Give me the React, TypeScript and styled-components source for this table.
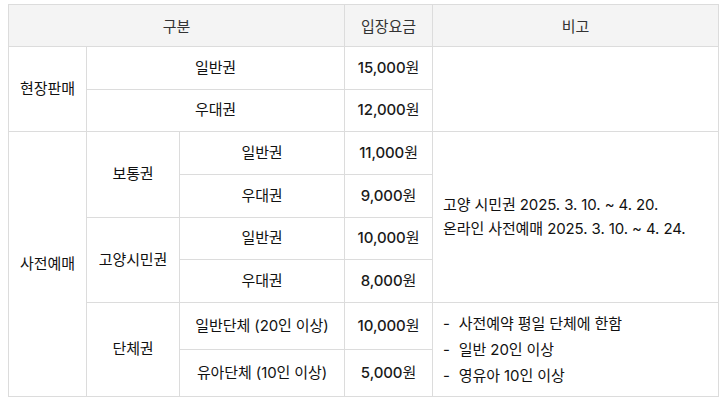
import React from 'react'
import styled, { createGlobalStyle } from 'styled-components'

const GlobalStyle = createGlobalStyle`
    body {
        margin: 0;
        background: #fff;
        font-family: Inter, "Noto Sans CJK KR", sans-serif;
        color: #111;
    }
`

const Page = styled.div`
    padding: 4px 6px 0 8px;
`

const Table = styled.table`
    width: 711px;
    border-collapse: collapse;
    table-layout: fixed;
    font-size: 15px;
    letter-spacing: -0.1px;
`

const Th = styled.th`
    height: 41px;
    background: #f4f4f4;
    border: 1px solid #dcdcdc;
    font-weight: 400;
    color: #333;
    text-align: center;
    padding: 0;
`

const Row = styled.tr<{ $h?: number }>`
    height: ${p => p.$h ?? 43}px;
`

const Td = styled.td`
    border: 1px solid #dcdcdc;
    text-align: center;
    vertical-align: middle;
    padding: 0;
    line-height: 1.5;
`

const Price = styled(Td)`
    font-weight: 500;
    color: #1a1a1a;
`

const Note = styled(Td)`
    text-align: left;
    padding: 0 10px;
    line-height: 24px;
`

const NoteList = styled.ul`
    list-style: none;
    margin: 0;
    padding: 0;
    line-height: 26px;

    li {
        display: flex;
        gap: 9px;
    }
`

const Won = styled.span`
    font-weight: 400;
`

export default function App() {
    const price = (v: string) => <Price>{v}<Won>원</Won></Price>
    return <Page>
        <GlobalStyle />
        <Table>
            <colgroup>
                <col style={{ width: 78 }} />
                <col style={{ width: 93 }} />
                <col style={{ width: 165 }} />
                <col style={{ width: 88 }} />
                <col />
            </colgroup>
            <thead>
                <tr>
                    <Th colSpan={3}>구분</Th>
                    <Th>입장요금</Th>
                    <Th>비고</Th>
                </tr>
            </thead>
            <tbody>
                <Row>
                    <Td rowSpan={2}>현장판매</Td>
                    <Td colSpan={2}>일반권</Td>
                    {price('15,000')}
                    <Td rowSpan={2}></Td>
                </Row>
                <Row $h={42}>
                    <Td colSpan={2}>우대권</Td>
                    {price('12,000')}
                </Row>
                <Row>
                    <Td rowSpan={6}>사전예매</Td>
                    <Td rowSpan={2}>보통권</Td>
                    <Td>일반권</Td>
                    {price('11,000')}
                    <Note rowSpan={4}>
                        고양 시민권 2025. 3. 10. ~ 4. 20.<br />
                        온라인 사전예매 2025. 3. 10. ~ 4. 24.
                    </Note>
                </Row>
                <Row>
                    <Td>우대권</Td>
                    {price('9,000')}
                </Row>
                <Row $h={42}>
                    <Td rowSpan={2}>고양시민권</Td>
                    <Td>일반권</Td>
                    {price('10,000')}
                </Row>
                <Row>
                    <Td>우대권</Td>
                    {price('8,000')}
                </Row>
                <Row $h={47}>
                    <Td rowSpan={2}>단체권</Td>
                    <Td>일반단체 (20인 이상)</Td>
                    {price('10,000')}
                    <Note rowSpan={2}>
                        <NoteList>
                            <li><span>-</span><span>사전예약 평일 단체에 한함</span></li>
                            <li><span>-</span><span>일반 20인 이상</span></li>
                            <li><span>-</span><span>영유아 10인 이상</span></li>
                        </NoteList>
                    </Note>
                </Row>
                <Row $h={47}>
                    <Td>유아단체 (10인 이상)</Td>
                    {price('5,000')}
                </Row>
            </tbody>
        </Table>
    </Page>
}
